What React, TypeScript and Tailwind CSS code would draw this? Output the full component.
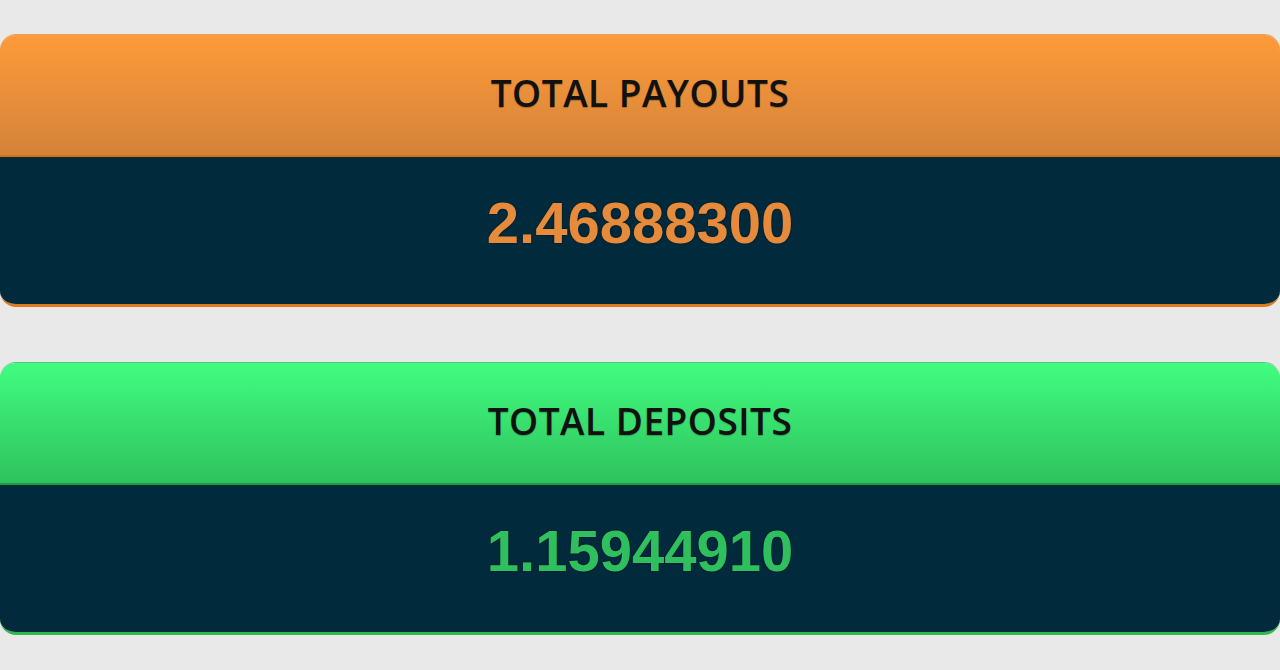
export default function App() {
  return (
    <div className="min-h-[670px] w-full bg-[#e9e9e9] pt-[34px] flex flex-col gap-[55px]">
      <StatCard
        title="TOTAL PAYOUTS"
        value="2.46888300"
        headerClass="bg-gradient-to-b from-[#fe9b3a] to-[#d4833a] border-b-2 border-[#d86f14]"
        cardClass="border-t border-t-[#e0a060] border-b-[3px] border-b-[#e07a1a]"
        valueClass="text-[#e58b3b]"
      />
      <StatCard
        title="TOTAL DEPOSITS"
        value="1.15944910"
        headerClass="bg-gradient-to-b from-[#41fd80] to-[#2fc25e] border-b-2 border-[#1b9a40]"
        cardClass="border-t border-t-[#60c080] border-b-[3px] border-b-[#2fb850]"
        valueClass="text-[#30bf5f]"
      />
    </div>
  )
}

function StatCard({
  title,
  value,
  headerClass,
  cardClass,
  valueClass,
}: {
  title: string
  value: string
  headerClass: string
  cardClass: string
  valueClass: string
}) {
  return (
    <div className={`w-full rounded-[16px] overflow-hidden ${cardClass}`}>
      <div className={`h-[122px] flex items-center justify-center pb-1 ${headerClass}`}>
        <span
          className="text-[37px] font-semibold text-[#111] tracking-[0.5px] [text-shadow:0_1px_1px_rgba(0,0,0,0.25)]"
          style={{ fontFamily: '"Open Sans", sans-serif' }}
        >
          {title}
        </span>
      </div>
      <div className="h-[147px] bg-[#012a3c] flex items-center justify-center pb-4">
        <span
          className={`text-[58px] font-bold leading-none [text-shadow:0_0_2px_rgba(0,0,0,0.6)] ${valueClass}`}
          style={{ fontFamily: '"Liberation Sans", Arial, sans-serif' }}
        >
          {value}
        </span>
      </div>
    </div>
  )
}
